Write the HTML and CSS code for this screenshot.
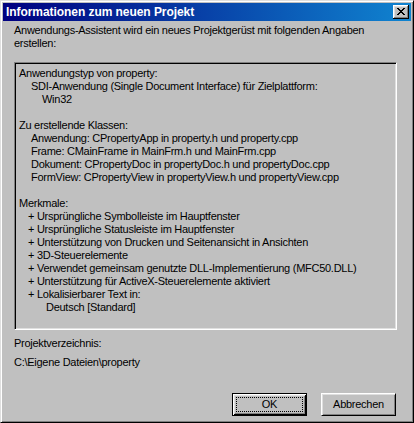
FILE: index.html
```html
<!DOCTYPE html>
<html lang="de">
<head>
<meta charset="utf-8">
<title>Informationen zum neuen Projekt</title>
<link rel="stylesheet" href="styles.css">
</head>
<body>
<div class="window">
  <div class="titlebar">
    <span class="title">Informationen zum neuen Projekt</span>
    <button class="close" aria-label="Schließen">
      <svg width="8" height="7" viewBox="0 0 8 7" shape-rendering="crispEdges">
        <path d="M0 0h2v1h-2zM6 0h2v1h-2zM1 1h2v1h-2zM5 1h2v1h-2zM2 2h4v1h-4zM3 3h2v1h-2zM2 4h4v1h-4zM1 5h2v1h-2zM5 5h2v1h-2zM0 6h2v1h-2zM6 6h2v1h-2z" fill="#000"/>
      </svg>
    </button>
  </div>
  <div class="body">
    <p class="intro">Anwendungs-Assistent wird ein neues Projektgerüst mit folgenden Angaben erstellen:</p>
    <div class="box">
      <div class="line">Anwendungstyp von property:</div>
      <div class="line i1">SDI-Anwendung (Single Document Interface) für Zielplattform:</div>
      <div class="line i2">Win32</div>
      <div class="line"></div>
      <div class="line">Zu erstellende Klassen:</div>
      <div class="line i1">Anwendung: CPropertyApp in property.h und property.cpp</div>
      <div class="line i1">Frame: CMainFrame in MainFrm.h und MainFrm.cpp</div>
      <div class="line i1">Dokument: CPropertyDoc in propertyDoc.h und propertyDoc.cpp</div>
      <div class="line i1">FormView: CPropertyView in propertyView.h und propertyView.cpp</div>
      <div class="line"></div>
      <div class="line">Merkmale:</div>
      <div class="line plus">+ Ursprüngliche Symbolleiste im Hauptfenster</div>
      <div class="line plus">+ Ursprüngliche Statusleiste im Hauptfenster</div>
      <div class="line plus">+ Unterstützung von Drucken und Seitenansicht in Ansichten</div>
      <div class="line plus">+ 3D-Steuerelemente</div>
      <div class="line plus">+ Verwendet gemeinsam genutzte DLL-Implementierung (MFC50.DLL)</div>
      <div class="line plus">+ Unterstützung für ActiveX-Steuerelemente aktiviert</div>
      <div class="line plus">+ Lokalisierbarer Text in:</div>
      <div class="line i3">Deutsch [Standard]</div>
    </div>
    <p class="label">Projektverzeichnis:</p>
    <p class="path">C:\Eigene Dateien\property</p>
    <div class="buttons">
      <button class="btn default"><span class="focus">OK</span></button>
      <button class="btn">Abbrechen</button>
    </div>
  </div>
</div>
</body>
</html>
```
FILE: styles.css
```css
* { box-sizing: border-box; }
html, body { margin: 0; padding: 0; background: #c0c0c0; }
body {
  font-family: "Liberation Sans", Arial, sans-serif;
  font-size: 11px;
  line-height: 13px;
  letter-spacing: -0.27px;
  color: #000;
}
.window {
  width: 414px;
  height: 423px;
  background: #c0c0c0;
  border: 1px solid;
  border-color: #dfdfdf #000 #000 #dfdfdf;
  box-shadow: inset 1px 1px 0 #fff, inset -1px -1px 0 #808080;
  padding: 2px;
  display: flex;
  flex-direction: column;
}
.titlebar {
  height: 18px;
  flex: none;
  background: linear-gradient(to right, #000080, #1084d0);
  display: flex;
  align-items: center;
  justify-content: space-between;
  padding: 0 2px 0 3px;
}
.title {
  color: #fff;
  font-weight: bold;
  font-size: 12px;
  letter-spacing: -0.06px;
}
.close {
  width: 16px;
  height: 14px;
  padding: 0 0 1px 0;
  margin: 0;
  background: #c0c0c0;
  border: none;
  box-shadow: inset -1px -1px 0 #000, inset 1px 1px 0 #fff, inset -2px -2px 0 #808080, inset 2px 2px 0 #dfdfdf;
  display: flex;
  align-items: center;
  justify-content: center;
}
.close svg { display: block; }
.body {
  flex: 1;
  display: flex;
  flex-direction: column;
  padding: 3px 14px 4px 11px;
}
.intro { margin: 0; }
.box {
  margin-top: 12px;
  height: 268px;
  border: 1px solid;
  border-color: #808080 #fff #fff #808080;
  box-shadow: inset 1px 1px 0 #000, inset -1px -1px 0 #dfdfdf;
  padding: 4px 3px 0 4px;
}
.line { height: 13px; white-space: nowrap; }
.i1 { padding-left: 12px; }
.i2 { padding-left: 23px; }
.plus { padding-left: 9px; }
.i3 { padding-left: 27px; }
.label { margin: 7px 0 0; }
.path { margin: 6px 0 0; }
.buttons {
  margin-top: auto;
  display: flex;
  justify-content: flex-end;
  gap: 14px;
  padding-right: 1px;
}
.btn {
  width: 75px;
  height: 23px;
  margin: 0;
  padding: 0;
  font: inherit;
  letter-spacing: inherit;
  color: #000;
  background: #c0c0c0;
  border: 1px solid;
  border-color: #fff #000 #000 #fff;
  box-shadow: inset 1px 1px 0 #dfdfdf, inset -1px -1px 0 #808080;
  display: flex;
  align-items: center;
  justify-content: center;
}
.btn.default {
  border: 1px solid #000;
  box-shadow: inset 1px 1px 0 #fff, inset -1px -1px 0 #000, inset 2px 2px 0 #dfdfdf, inset -2px -2px 0 #808080;
  padding: 4px;
}
.focus {
  flex: 1;
  align-self: stretch;
  display: flex;
  align-items: center;
  justify-content: center;
  outline: 1px dotted #000;
  outline-offset: 0;
}
```
